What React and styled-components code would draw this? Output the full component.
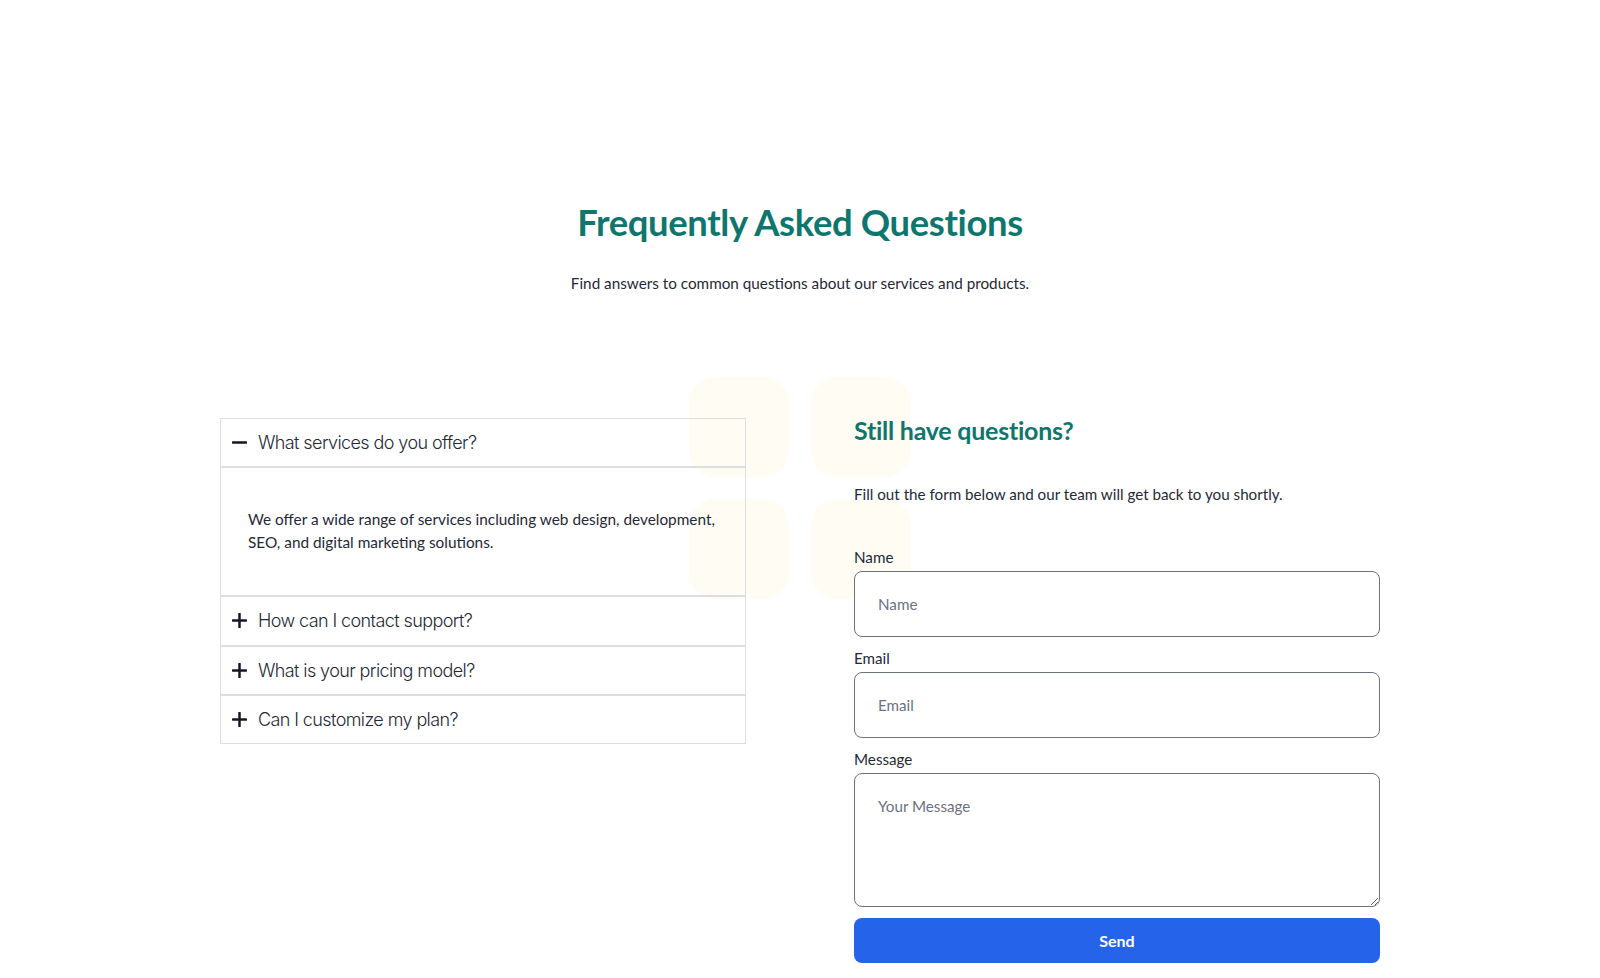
import React, { useState } from "react";
import styled, { createGlobalStyle } from "styled-components";

const GlobalStyle = createGlobalStyle`
  * { box-sizing: border-box; }
  html, body { margin: 0; padding: 0; background: #ffffff; }
  body {
    font-family: "Lato", "Noto Sans", sans-serif;
    color: #1f2937;
    -webkit-font-smoothing: antialiased;
  }
`;

const Page = styled.main`
  min-height: 978px;
  padding-top: 202px;
`;

const Hero = styled.header`
  text-align: center;
`;

const Title = styled.h2`
  margin: 0;
  font-size: 36.4px;
  line-height: 40px;
  font-weight: 700;
  color: #0f766e;
  letter-spacing: -0.01em;
`;

const Subtitle = styled.p`
  margin: 29px 0 0;
  font-size: 15.27px;
  line-height: 24px;
  color: #1f2937;
`;

const Grid = styled.section`
  position: relative;
  width: 1160px;
  margin: 119px auto 0;
  display: grid;
  grid-template-columns: 526px 526px;
  column-gap: 108px;
  align-items: start;
`;

const Decor = styled.div`
  position: absolute;
  left: 50%;
  top: -37px;
  transform: translateX(-50%);
  display: grid;
  grid-template-columns: 100px 100px;
  gap: 22px;
  z-index: 0;
  pointer-events: none;
`;

const DecorTile = styled.span`
  display: block;
  width: 100px;
  height: 100px;
  border-radius: 26px;
  background: #fefcf3;
`;

const Column = styled.div`
  position: relative;
  z-index: 1;
  margin-top: ${(p) => p.$offset || 0}px;
`;

const Accordion = styled.div`
  display: flex;
  flex-direction: column;
`;

const Header = styled.button`
  display: flex;
  align-items: center;
  gap: 11px;
  width: 100%;
  height: 49.33px;
  padding: 0 0 0 11px;
  border: 1px solid #dcdee3;
  background: transparent;
  cursor: pointer;
  text-align: left;
  font-family: "Inter", "Noto Sans", sans-serif;
  font-weight: 300;
  font-size: 18px;
  letter-spacing: -0.033em;
  color: #1f2937;
`;

const Panel = styled.div`
  border: 1px solid #dcdee3;
  padding: 40px 27px 42px;
  height: 129px;
`;

const Answer = styled.p`
  margin: 0;
  font-size: 15.37px;
  line-height: 22.5px;
  color: #1f2937;
`;

const Icon = ({ open }) => (
  <svg width="15" height="15" viewBox="0 0 15 15" aria-hidden="true">
    <rect x="0" y="6.25" width="15" height="2.5" rx="0.4" fill="#111827" />
    {!open && <rect x="6.25" y="0" width="2.5" height="15" rx="0.4" fill="#111827" />}
  </svg>
);

const FormTitle = styled.h3`
  margin: 0;
  font-size: 25px;
  line-height: 32px;
  font-weight: 700;
  color: #0f766e;
  letter-spacing: -0.01em;
`;

const FormIntro = styled.p`
  margin: 36px 0 0;
  font-size: 15.2px;
  line-height: 24px;
  color: #1f2937;
`;

const Form = styled.form`
  margin-top: 41px;
  display: flex;
  flex-direction: column;
`;

const Field = styled.div`
  display: flex;
  flex-direction: column;
  margin-bottom: 11px;
`;

const Label = styled.label`
  font-size: 15.2px;
  line-height: 20px;
  font-weight: 400;
  color: #1f2937;
  margin-bottom: 4px;
`;

const inputStyles = `
  width: 100%;
  border: 1px solid #6b7280;
  border-radius: 8px;
  background: #ffffff;
  font-family: "Lato", "Noto Sans", sans-serif;
  font-size: 15.2px;
  color: #1f2937;
  padding: 0 23px;
  outline: none;
  &::placeholder { color: #6b7280; opacity: 1; }
`;

const Input = styled.input`
  ${inputStyles}
  height: 66px;
`;

const TextArea = styled.textarea`
  ${inputStyles}
  height: 134px;
  padding-top: 22px;
  line-height: 20px;
  resize: vertical;
  display: block;
`;

const SendButton = styled.button`
  height: 45px;
  width: 100%;
  border: none;
  border-radius: 8px;
  background: #2563eb;
  color: #ffffff;
  font-family: "Lato", "Noto Sans", sans-serif;
  font-size: 16px;
  font-weight: 700;
  cursor: pointer;
`;

const faqs = [
  {
    q: "What services do you offer?",
    a: "We offer a wide range of services including web design, development, SEO, and digital marketing solutions.",
  },
  { q: "How can I contact support?", a: "You can reach our support team via email or the contact form." },
  { q: "What is your pricing model?", a: "Our pricing is flexible and depends on the scope of your project." },
  { q: "Can I customize my plan?", a: "Yes, every plan can be tailored to your needs." },
];

export default function App() {
  const [open, setOpen] = useState(0);
  return (
    <>
      <GlobalStyle />
      <Page>
        <Hero>
          <Title>Frequently Asked Questions</Title>
          <Subtitle>Find answers to common questions about our services and products.</Subtitle>
        </Hero>
        <Grid>
          <Decor>
            <DecorTile />
            <DecorTile />
            <DecorTile />
            <DecorTile />
          </Decor>
          <Column $offset={4}>
            <Accordion>
              {faqs.map((f, i) => (
                <div key={f.q}>
                  <Header type="button" onClick={() => setOpen(open === i ? -1 : i)}>
                    <Icon open={open === i} />
                    <span>{f.q}</span>
                  </Header>
                  {open === i && (
                    <Panel>
                      <Answer>{f.a}</Answer>
                    </Panel>
                  )}
                </div>
              ))}
            </Accordion>
          </Column>
          <Column>
            <FormTitle>Still have questions?</FormTitle>
            <FormIntro>Fill out the form below and our team will get back to you shortly.</FormIntro>
            <Form onSubmit={(e) => e.preventDefault()}>
              <Field>
                <Label htmlFor="name">Name</Label>
                <Input id="name" placeholder="Name" />
              </Field>
              <Field>
                <Label htmlFor="email">Email</Label>
                <Input id="email" type="email" placeholder="Email" />
              </Field>
              <Field>
                <Label htmlFor="message">Message</Label>
                <TextArea id="message" placeholder="Your Message" />
              </Field>
              <SendButton type="submit">Send</SendButton>
            </Form>
          </Column>
        </Grid>
      </Page>
    </>
  );
}
